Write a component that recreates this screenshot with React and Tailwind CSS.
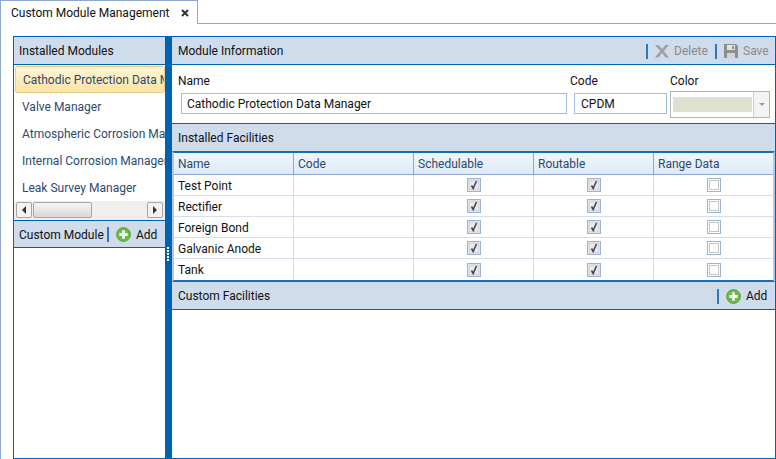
const modules = [
  "Cathodic Protection Data Manager",
  "Valve Manager",
  "Atmospheric Corrosion Manager",
  "Internal Corrosion Manager",
  "Leak Survey Manager",
];

const facilities = ["Test Point", "Rectifier", "Foreign Bond", "Galvanic Anode", "Tank"];

function AddIcon() {
  return (
    <svg width="15" height="15" viewBox="0 0 16 16">
      <circle cx="8" cy="8" r="7.4" fill="#6cb84a" stroke="#58a338" />
      <path d="M8 3.5v9M3.5 8h9" stroke="#f2f8ee" strokeWidth="3" />
    </svg>
  );
}

function DeleteIcon() {
  return (
    <svg width="16" height="16" viewBox="0 0 16 16">
      <path d="M1 2h3.5L8 6l3.5-4H15l-5.2 6 5.2 6.5h-3.5L8 10l-3.5 4.5H1L6.2 8z" fill="#a0a0a0" />
    </svg>
  );
}

function SaveIcon() {
  return (
    <svg width="16" height="16" viewBox="0 0 16 16">
      <path d="M1 1h12l2 2v12H1z" fill="#8f8f8f" />
      <rect x="4" y="2" width="8" height="5" fill="#e2e2e2" />
      <rect x="9" y="3" width="2" height="3" fill="#8f8f8f" />
      <rect x="4" y="10" width="8" height="5" fill="#d4d4d4" />
    </svg>
  );
}

function CheckBox({ checked }) {
  return (
    <div className={`flex h-[14px] w-[14px] items-center justify-center border border-[#9fb4d2] ${checked ? "bg-[#e2e2e2]" : "bg-white"}`}>
      <div className={`flex h-[10px] w-[10px] items-center justify-center border ${checked ? "border-[#d6d6d6] bg-[#e9e9e9]" : "border-[#c4c4c4]"}`}>
        {checked && (
          <svg width="10" height="10" viewBox="0 0 10 10" className="shrink-0">
            <path d="M2.5 5.5 4.2 8.5 7.5 1" fill="none" stroke="#3f4866" strokeWidth="1.6" />
          </svg>
        )}
      </div>
    </div>
  );
}

function Bar({ title, inset, children }) {
  return (
    <div className={`flex h-[27px] shrink-0 items-center justify-between bg-[#cfdcec] pr-[6px] pt-[1px] ${inset ? "pl-[6px]" : "pl-[5px]"}`}>
      <span>{title}</span>
      {children}
    </div>
  );
}

function AddButton() {
  return (
    <div className="flex items-center">
      <div className="mr-[7px] h-[15px] w-[2px] bg-[#2f78b7]" />
      <AddIcon />
      <span className="ml-[5px] w-[23px]">Add</span>
    </div>
  );
}

export default function App() {
  return (
    <div className="flex h-[459px] w-[776px] flex-col overflow-hidden bg-white text-[12px] text-[#111] [font-family:Roboto,sans-serif]">
      {/* Tab strip */}
      <div className="flex h-[24px] shrink-0 border-b border-[#8fa8cf]">
        <div className="flex h-[24px] w-[198px] items-center whitespace-nowrap border border-b-0 border-[#8fa8cf] bg-white pl-[10px]">
          <span className="w-[170px]">Custom Module Management</span>
          <svg width="8" height="8" viewBox="0 0 8 8">
            <path d="M1 1l6 6M7 1L1 7" stroke="#333" strokeWidth="2" />
          </svg>
        </div>
      </div>

      <div className="flex min-h-0 flex-1 border-l border-[#8fa8cf] pl-[12px] pt-[12px]">
        <div className="flex min-w-0 flex-1 border border-[#0063b1]">
          {/* Left column */}
          <div className="flex w-[151px] shrink-0 flex-col">
            <Bar title="Installed Modules" />
            <div className="h-[137px] shrink-0 overflow-hidden border-t border-[#0063b1] pl-[1px] pt-[1px]">
              {modules.map((m, i) => (
                <div
                  key={m}
                  className={`flex h-[27px] items-center overflow-hidden whitespace-nowrap pl-[7px] pt-[1px] text-[#2b4a6f] ${i === 0 ? "rounded-[2px] border border-[#e8cf8e] bg-gradient-to-b from-[#fff5d8] to-[#fde3a4] pl-[6px]" : ""}`}
                >
                  {m}
                </div>
              ))}
            </div>
            {/* Scrollbar */}
            <div className="flex h-[19px] shrink-0 items-start gap-[1px] bg-[#efefef] px-[2px] pt-[1px]">
              <div className="flex h-[16px] w-[16px] items-center justify-center rounded-[2px] border border-[#a6a6a6] bg-[#f3f3f3]">
                <div className="h-0 w-0 border-y-[4px] border-r-[4px] border-y-transparent border-r-[#333]" />
              </div>
              <div className="h-[16px] w-[59px] rounded-[2px] border border-[#a6a6a6] bg-gradient-to-b from-[#f6f6f6] to-[#d8d8d8]" />
              <div className="flex-1" />
              <div className="flex h-[16px] w-[16px] items-center justify-center rounded-[2px] border border-[#a6a6a6] bg-[#f3f3f3]">
                <div className="h-0 w-0 border-y-[4px] border-l-[4px] border-y-transparent border-l-[#333]" />
              </div>
            </div>
            <div className="flex h-[28px] shrink-0 items-center border-y border-[#0063b1] bg-[#cfdcec] pl-[5px] pt-[1px]">
              <span className="mr-[3px] w-[85px] overflow-hidden whitespace-nowrap">Custom Modules</span>
              <AddButton />
            </div>
            <div className="flex-1" />
          </div>

          {/* Splitter */}
          <div className="relative w-[7px] shrink-0 bg-[#0063b1]">
            <div className="absolute left-[2px] top-[210px] flex flex-col gap-[1px]">
              {[0, 1, 2, 3, 4].map(i => (
                <div key={i} className="h-[2px] w-[2px] bg-white" />
              ))}
            </div>
          </div>

          {/* Right column */}
          <div className="flex min-w-0 flex-1 flex-col">
            <Bar title="Module Information" inset>
              <div className="flex items-center text-[#8a8a8a]">
                <div className="mr-[6px] h-[15px] w-[2px] bg-[#2f78b7]" />
                <DeleteIcon />
                <span className="ml-[4px] mr-[7px] w-[34px]">Delete</span>
                <div className="mr-[6px] h-[15px] w-[2px] bg-[#2f78b7]" />
                <SaveIcon />
                <span className="ml-[4px] w-[26px]">Save</span>
              </div>
            </Bar>

            {/* Form */}
            <div className="flex h-[60px] shrink-0 border-y border-[#0063b1] pl-[6px]">
              <div className="w-[392px]">
                <div className="h-[20px] pt-[8px] leading-[16px]">Name</div>
                <div className="ml-[3px] mt-[8px] flex h-[21px] w-[386px] items-center border border-[#a3bcd9] px-[5px]">
                  Cathodic Protection Data Manager
                </div>
              </div>
              <div className="w-[100px]">
                <div className="h-[20px] pt-[8px] leading-[16px]">Code</div>
                <div className="ml-[4px] mt-[8px] flex h-[21px] w-[93px] items-center border border-[#a3bcd9] px-[6px]">
                  CPDM
                </div>
              </div>
              <div>
                <div className="h-[20px] pt-[8px] leading-[16px]">Color</div>
                <div className="mt-[6px] flex h-[27px] w-[100px] border border-[#b5b5b5]">
                  <div className="flex-1 py-[5px] pl-[2px] pr-[1px]">
                    <div className="h-full bg-[#dfe0d0]" />
                  </div>
                  <div className="flex w-[16px] items-center justify-center border-l border-[#cfcfcf] bg-[#f3f3f3]">
                    <div className="h-0 w-0 border-x-[3px] border-t-[3px] border-x-transparent border-t-[#9a9a9a]" />
                  </div>
                </div>
              </div>
            </div>

            <Bar title="Installed Facilities" inset />

            {/* Facilities grid */}
            <div className="shrink-0 border-y-2 border-x-2 border-[#1d6cae] border-x-[#b9c7da]">
              <div className="grid h-[22px] grid-cols-[120px_120px_120px_120px_1fr] border-b border-[#8fa8cf] bg-gradient-to-b from-[#f1f6fc] to-[#dfeaf7] text-[#2b4a6f]">
                {["Name", "Code", "Schedulable", "Routable", "Range Data"].map(h => (
                  <div key={h} className="flex items-center border-r border-[#8fa8cf] pl-[4px] last:border-r-0">
                    {h}
                  </div>
                ))}
              </div>
              {facilities.map(f => (
                <div key={f} className="grid h-[21px] grid-cols-[120px_120px_120px_120px_1fr] border-b border-[#d5dfec] last:border-b-0">
                  <div className="flex items-center border-r border-[#d5dfec] pl-[4px] pt-[1px]">{f}</div>
                  <div className="border-r border-[#d5dfec]" />
                  <div className="flex items-center justify-center border-r border-[#d5dfec]">
                    <CheckBox checked />
                  </div>
                  <div className="flex items-center justify-center border-r border-[#d5dfec]">
                    <CheckBox checked />
                  </div>
                  <div className="flex items-center justify-center">
                    <CheckBox />
                  </div>
                </div>
              ))}
            </div>

            <Bar title="Custom Facilities" inset>
              <AddButton />
            </Bar>
            <div className="flex-1 border-t border-[#0063b1]" />
          </div>
        </div>
      </div>
    </div>
  );
}
